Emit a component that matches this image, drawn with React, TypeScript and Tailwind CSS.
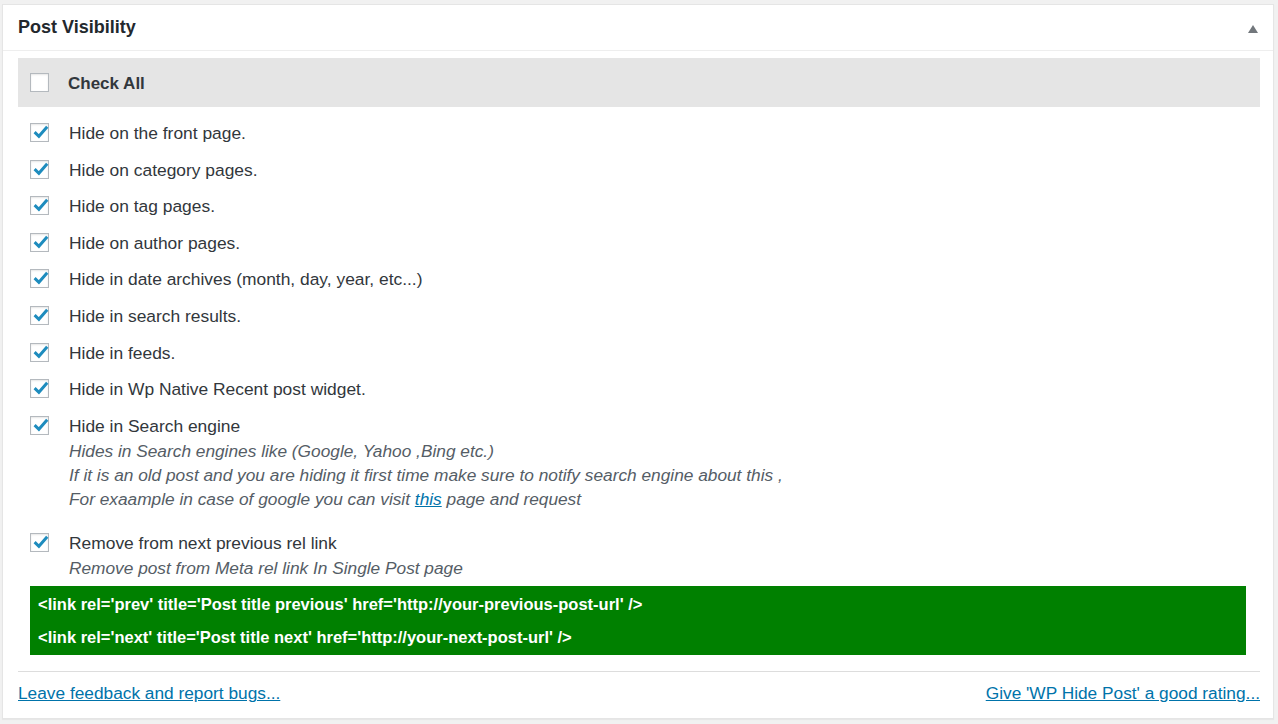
import React from 'react';

const items = [
  'Hide on the front page.',
  'Hide on category pages.',
  'Hide on tag pages.',
  'Hide on author pages.',
  'Hide in date archives (month, day, year, etc...)',
  'Hide in search results.',
  'Hide in feeds.',
  'Hide in Wp Native Recent post widget.',
];

const Box: React.FC<{ checked?: boolean }> = ({ checked }) => (
  <span className="relative flex h-[19px] w-[19px] shrink-0 items-center justify-center border border-[#b4b9be] bg-white shadow-[inset_0_1px_2px_rgba(0,0,0,0.1)]">
    {checked && (
      <svg viewBox="0 0 20 20" className="absolute left-[0px] top-[-2px] h-[20px] w-[20px]">
        <path d="M3.6 10.2 L7.9 14.3 L16.2 4.8" fill="none" stroke="#1e8cbe" strokeWidth="3" strokeLinejoin="miter" />
      </svg>
    )}
  </span>
);

const Row: React.FC<{ label: string; children?: React.ReactNode }> = ({ label, children }) => (
  <div className="flex items-start gap-[20px]">
    <div className="pt-[2px]">
      <Box checked />
    </div>
    <div>
      <div className="text-[17.4px] leading-[24px] text-[#32373c]">{label}</div>
      {children}
    </div>
  </div>
);

export default function App() {
  return (
    <div className="min-h-[724px] bg-[#f1f1f1] pl-[2px] pt-[4px] font-['Liberation_Sans',Arial,sans-serif]">
      <div className="h-[715px] w-[1272px] border border-[#e5e5e5] bg-white shadow-[0_1px_1px_rgba(0,0,0,0.04)]">
        {/* header */}
        <div className="flex h-[46px] items-center justify-between border-b border-[#eeeeee] pl-[15px] pr-[15px]">
          <h2 className="text-[18px] font-bold text-[#23282d]">Post Visibility</h2>
          <svg viewBox="0 0 10 8" className="mt-[2px] h-[8px] w-[10px]">
            <path d="M5 0 L10 8 L0 8 Z" fill="#72777c" />
          </svg>
        </div>

        <div className="pl-[15px] pr-[13px] pt-[7px]">
          {/* check all */}
          <div className="flex h-[49px] items-center gap-[19px] bg-[#e5e5e5] pl-[12px]">
            <Box />
            <span className="pt-[3px] text-[17px] font-bold text-[#32373c]">Check All</span>
          </div>

          <div className="flex flex-col gap-y-[12.6px] pl-[12px] pr-[13px] pt-[14px]">
            {items.map((t) => (
              <Row key={t} label={t} />
            ))}
            <Row label="Hide in Search engine">
              <div className="mt-[1px] text-[17.3px] italic leading-[24px] text-[#555d66]">
                <p>Hides in Search engines like (Google, Yahoo ,Bing etc.)</p>
                <p>If it is an old post and you are hiding it first time make sure to notify search engine about this ,</p>
                <p>
                  For exaample in case of google you can visit{' '}
                  <a href="#" className="text-[#0073aa] underline">this</a> page and request
                </p>
              </div>
            </Row>
            <div className="mt-[8px]">
              <Row label="Remove from next previous rel link">
                <p className="mt-[1px] text-[17.3px] italic leading-[24px] text-[#555d66]">
                  Remove post from Meta rel link In Single Post page
                </p>
              </Row>
            </div>
          </div>

          {/* code sample */}
          <div className="ml-[12px] mr-[14px] mt-[6px] flex flex-col gap-[9px] bg-[#008000] px-[8px] py-[6px] text-[16.5px] font-bold leading-[24px] text-white">
            <p>&lt;link rel='prev' title='Post title previous' href='http://your-previous-post-url' /&gt;</p>
            <p>&lt;link rel='next' title='Post title next' href='http://your-next-post-url' /&gt;</p>
          </div>

          {/* footer */}
          <div className="mt-[16px] flex items-center justify-between border-t border-[#dddddd] pt-[9px] text-[17.3px] leading-[24px]">
            <a href="#" className="text-[#0073aa] underline">Leave feedback and report bugs...</a>
            <a href="#" className="text-[#0073aa] underline">Give 'WP Hide Post' a good rating...</a>
          </div>
        </div>
      </div>
    </div>
  );
}
